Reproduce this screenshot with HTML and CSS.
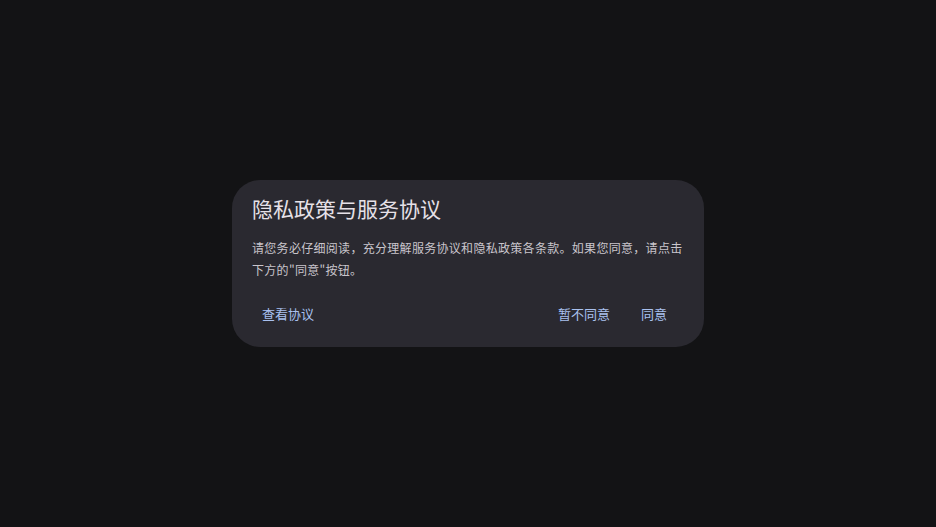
FILE: index.html
```html
<!DOCTYPE html>
<html lang="zh-CN">
<head>
<meta charset="utf-8">
<title>隐私政策与服务协议</title>
<link rel="stylesheet" href="styles.css">
</head>
<body>
<div class="screen">
  <div class="dialog">
    <h1 class="title">隐私政策与服务协议</h1>
    <p class="message">请您务必仔细阅读，充分理解服务协议和隐私政策各条款。如果您同意，请点击下方的"同意"按钮。</p>
    <div class="actions">
      <button class="btn">查看协议</button>
      <span class="spacer"></span>
      <button class="btn">暂不同意</button>
      <button class="btn">同意</button>
    </div>
  </div>
</div>
</body>
</html>
```

FILE: styles.css
```css
html, body {
  margin: 0;
  padding: 0;
  background: #131315;
}
.screen {
  width: 936px;
  height: 527px;
  display: flex;
  align-items: center;
  justify-content: center;
  font-family: "Noto Sans CJK SC", "Noto Sans", sans-serif;
}
.dialog {
  width: 472px;
  box-sizing: border-box;
  background: #2a2930;
  border-radius: 28px;
  padding: 14px 0 14px;
}
.title {
  margin: 0;
  padding: 0 20px;
  font-size: 21px;
  line-height: 28px;
  font-weight: 400;
  color: #e6e1e8;
}
.message {
  margin: 15px 0 0;
  padding: 0 20px;
  font-size: 12px;
  line-height: 22px;
  letter-spacing: 0.3px;
  color: #c9c5cc;
}
.actions {
  display: flex;
  align-items: center;
  margin-top: 12px;
  padding: 0 18px;
}
.spacer {
  flex: 1;
}
.btn {
  height: 40px;
  min-width: 64px;
  padding: 0 12px;
  border: none;
  background: transparent;
  border-radius: 20px;
  font-family: inherit;
  font-size: 13px;
  color: #a9c1ef;
  cursor: pointer;
}
```
